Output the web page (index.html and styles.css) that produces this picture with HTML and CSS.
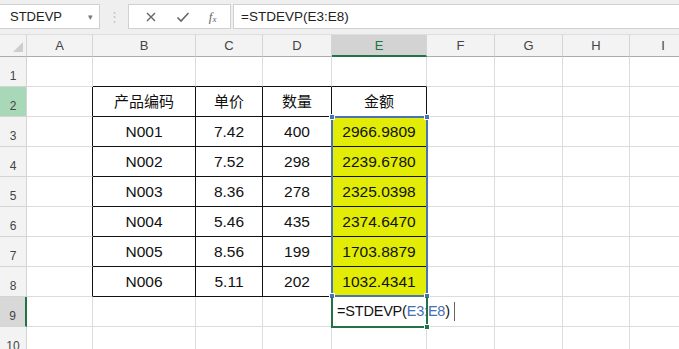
FILE: index.html
```html
<!DOCTYPE html>
<html>
<head>
<meta charset="utf-8">
<link rel="stylesheet" href="styles.css">
</head>
<body>
<div class="toolbar">
  <div class="namebox"><span>STDEVP</span><span class="caret">&#9662;</span></div>
  <div class="dots">&#8942;</div>
  <div class="iconbox">
    <svg class="ic" width="12" height="12" viewBox="0 0 12 12"><path d="M2 2 L10 10 M10 2 L2 10" stroke="#666" stroke-width="1.4" fill="none"/></svg>
    <svg class="ic" width="14" height="12" viewBox="0 0 14 12"><path d="M1.5 6.5 L5 10 L12.5 2" stroke="#666" stroke-width="1.6" fill="none"/></svg>
    <span class="fx">f<sub>x</sub></span>
  </div>
  <div class="formula">=STDEVP(E3:E8)</div>
</div>
<div class="sheet">
  <div class="corner"><span class="tri"></span></div>
  <div class="ch">A</div><div class="ch">B</div><div class="ch">C</div><div class="ch">D</div><div class="ch sel">E</div><div class="ch">F</div><div class="ch">G</div><div class="ch">H</div><div class="ch">I</div>

  <div class="rh">1</div><div class="c"></div><div class="c tb"></div><div class="c tb"></div><div class="c tb"></div><div class="c tb"></div><div class="c"></div><div class="c"></div><div class="c"></div><div class="c"></div>

  <div class="rh g">2</div><div class="c lb"></div><div class="c k cn">产品编码</div><div class="c k cn">单价</div><div class="c k cn">数量</div><div class="c k cn">金额</div><div class="c"></div><div class="c"></div><div class="c"></div><div class="c"></div>

  <div class="rh">3</div><div class="c lb"></div><div class="c k">N001</div><div class="c k">7.42</div><div class="c k">400</div><div class="c k y">2966.9809</div><div class="c"></div><div class="c"></div><div class="c"></div><div class="c"></div>

  <div class="rh">4</div><div class="c lb"></div><div class="c k">N002</div><div class="c k">7.52</div><div class="c k">298</div><div class="c k y">2239.6780</div><div class="c"></div><div class="c"></div><div class="c"></div><div class="c"></div>

  <div class="rh">5</div><div class="c lb"></div><div class="c k">N003</div><div class="c k">8.36</div><div class="c k">278</div><div class="c k y">2325.0398</div><div class="c"></div><div class="c"></div><div class="c"></div><div class="c"></div>

  <div class="rh">6</div><div class="c lb"></div><div class="c k">N004</div><div class="c k">5.46</div><div class="c k">435</div><div class="c k y">2374.6470</div><div class="c"></div><div class="c"></div><div class="c"></div><div class="c"></div>

  <div class="rh">7</div><div class="c lb"></div><div class="c k">N005</div><div class="c k">8.56</div><div class="c k">199</div><div class="c k y">1703.8879</div><div class="c"></div><div class="c"></div><div class="c"></div><div class="c"></div>

  <div class="rh">8</div><div class="c lb"></div><div class="c k">N006</div><div class="c k">5.11</div><div class="c k">202</div><div class="c k y">1032.4341</div><div class="c"></div><div class="c"></div><div class="c"></div><div class="c"></div>

  <div class="rh selr">9</div><div class="c"></div><div class="c"></div><div class="c"></div><div class="c"></div><div class="c edit"><span class="etext">=STDEVP(<span class="ref">E3:E8</span>)</span><span class="cursor"></span></div><div class="c"></div><div class="c"></div><div class="c"></div><div class="c"></div>

  <div class="rh">10</div><div class="c"></div><div class="c"></div><div class="c"></div><div class="c"></div><div class="c"></div><div class="c"></div><div class="c"></div><div class="c"></div><div class="c"></div>

  <div class="range">
    <span class="h h1"></span><span class="h h2"></span><span class="h h3"></span><span class="h h4"></span>
  </div>
  <div class="active"><span class="fill"></span></div>
</div>
</body>
</html>
```
FILE: styles.css
```css
* { box-sizing: border-box; }
html, body { margin: 0; padding: 0; background: #fff; overflow: hidden; }
body { width: 679px; height: 349px; font-family: "Liberation Sans", Arial, "Noto Sans CJK SC", sans-serif; }

.toolbar {
  height: 35px;
  background: #efefef;
  border-bottom: 1px solid #dedede;
  display: flex;
  align-items: flex-start;
  padding-top: 4px;
}
.namebox {
  width: 100px;
  height: 25px;
  background: #fff;
  border: 1px solid #d0d0d0;
  border-left: none;
  display: flex;
  align-items: center;
  justify-content: space-between;
  padding: 0 6px 0 10px;
  font-size: 13px;
  color: #222;
}
.caret { color: #777; font-size: 9px; }
.dots {
  width: 28px;
  height: 25px;
  text-align: center;
  line-height: 25px;
  color: #c4c4c4;
  font-size: 13px;
}
.iconbox {
  width: 103px;
  height: 25px;
  background: #fff;
  border: 1px solid #d0d0d0;
  display: flex;
  align-items: center;
  justify-content: space-around;
  padding: 0 4px 0 6px;
}
.fx {
  font-family: "Liberation Serif", serif;
  font-style: italic;
  font-size: 13px;
  color: #666;
}
.fx sub { font-size: 9px; vertical-align: -1px; }
.formula {
  flex: 1;
  margin-left: 2px;
  height: 25px;
  background: #fff;
  border: 1px solid #d0d0d0;
  border-right: none;
  font-size: 13.5px;
  line-height: 23px;
  padding-left: 7px;
  color: #222;
}

.sheet {
  position: relative;
  display: grid;
  grid-template-columns: 27px 66px 103px 67px 69px 95px 68px 68px 67px 67px;
  grid-template-rows: 22px repeat(10, 30px);
  width: 697px;
}
.corner {
  background: #f3f3f3;
  border-right: 1px solid #d4d4d4;
  border-bottom: 1px solid #ababab;
  position: relative;
}
.tri {
  position: absolute;
  right: 3px;
  bottom: 4px;
  width: 0; height: 0;
  border-left: 10px solid transparent;
  border-bottom: 10px solid #cdcdcd;
}
.ch {
  background: #f3f3f3;
  border-right: 1px solid #d4d4d4;
  border-bottom: 1px solid #ababab;
  text-align: center;
  font-size: 13px;
  line-height: 22px;
  color: #444;
}
.ch.sel {
  background: #d3d3d3;
  border-bottom: 2px solid #217346;
  color: #217346;
}
.rh {
  background: #f3f3f3;
  border-right: 1px solid #d4d4d4;
  border-bottom: 1px solid #d4d4d4;
  font-size: 12px;
  color: #444;
  text-align: center;
  padding-top: 12px;
}
.rh.g { background: #a9d8b9; }
.rh.selr { background: #d8d8d8; border-right: 2px solid #217346; }
.c {
  border-right: 1px solid #dcdcdc;
  border-bottom: 1px solid #dcdcdc;
  font-size: 15.5px;
  color: #111;
  text-align: center;
  line-height: 29px;
  white-space: nowrap;
}
.c.cn { font-size: 15px; }
.c.k { border-right-color: #111; border-bottom-color: #111; }
.c.tb { border-bottom-color: #111; }
.c.lb { border-right-color: #111; }
.c.y { background: #e2ec04; }
.c.edit {
  display: flex;
  align-items: center;
  padding-left: 5px;
  font-size: 14.5px;
  overflow: visible;
}
.etext { letter-spacing: -0.2px; }
.ref { color: #4670b6; }
.cursor {
  flex: none;
  width: 1px;
  height: 19px;
  background: #666;
  margin-left: 4px;
}

.range {
  position: absolute;
  left: 331px;
  top: 81px;
  width: 97px;
  height: 181px;
  border: 2px solid #4a73b6;
  pointer-events: none;
}
.h {
  position: absolute;
  width: 6px;
  height: 6px;
  background: #4a73b6;
  border: 1px solid #fff;
}
.h1 { left: -4px; top: -4px; }
.h2 { right: -4px; top: -4px; }
.h3 { left: -4px; bottom: -4px; }
.h4 { right: -4px; bottom: -4px; }
.active {
  position: absolute;
  left: 331px;
  top: 262px;
  width: 97px;
  height: 31px;
  border: 2px solid #217346;
  border-top: none;
}
.fill {
  position: absolute;
  right: -4px;
  bottom: -4px;
  width: 6px;
  height: 6px;
  background: #217346;
  border: 1px solid #fff;
}
```
